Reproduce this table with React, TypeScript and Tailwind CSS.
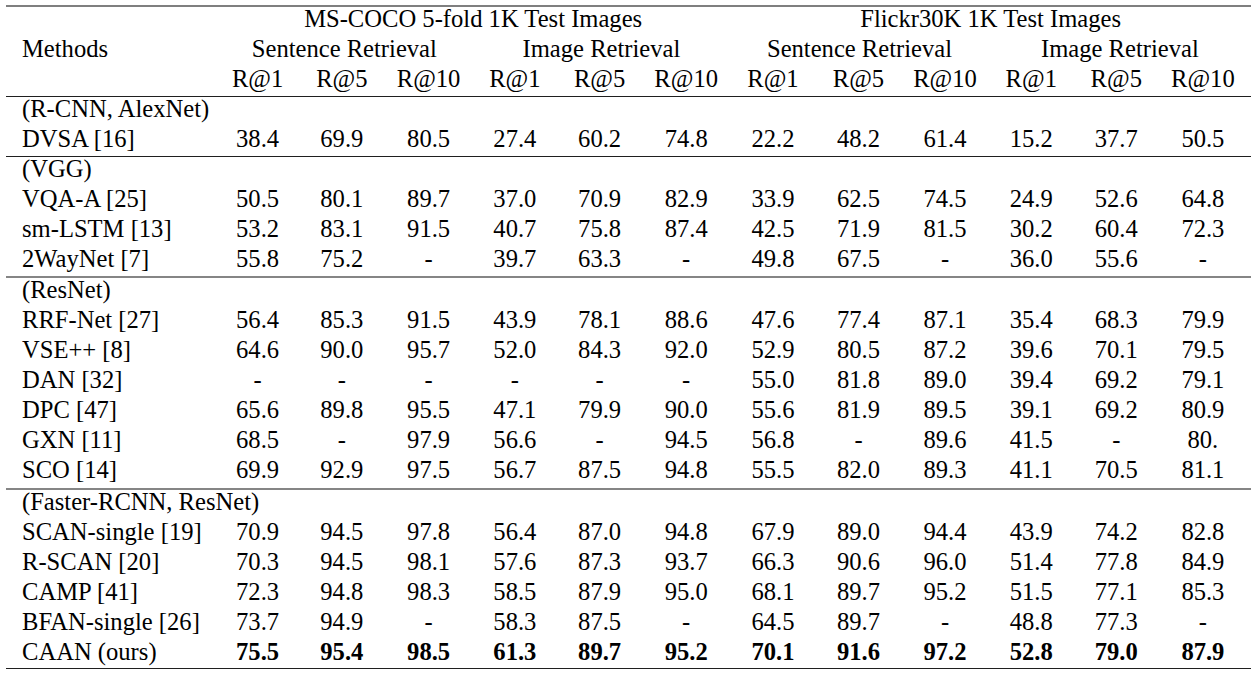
import React from 'react';

type Row = { name: string; vals: string[]; bold?: boolean };
type Group = { label: string; rows: Row[] };

const groups: Group[] = [
  {
    label: '(R-CNN, AlexNet)',
    rows: [{ name: 'DVSA [16]', vals: ['38.4', '69.9', '80.5', '27.4', '60.2', '74.8', '22.2', '48.2', '61.4', '15.2', '37.7', '50.5'] }],
  },
  {
    label: '(VGG)',
    rows: [
      { name: 'VQA-A [25]', vals: ['50.5', '80.1', '89.7', '37.0', '70.9', '82.9', '33.9', '62.5', '74.5', '24.9', '52.6', '64.8'] },
      { name: 'sm-LSTM [13]', vals: ['53.2', '83.1', '91.5', '40.7', '75.8', '87.4', '42.5', '71.9', '81.5', '30.2', '60.4', '72.3'] },
      { name: '2WayNet [7]', vals: ['55.8', '75.2', '-', '39.7', '63.3', '-', '49.8', '67.5', '-', '36.0', '55.6', '-'] },
    ],
  },
  {
    label: '(ResNet)',
    rows: [
      { name: 'RRF-Net [27]', vals: ['56.4', '85.3', '91.5', '43.9', '78.1', '88.6', '47.6', '77.4', '87.1', '35.4', '68.3', '79.9'] },
      { name: 'VSE++ [8]', vals: ['64.6', '90.0', '95.7', '52.0', '84.3', '92.0', '52.9', '80.5', '87.2', '39.6', '70.1', '79.5'] },
      { name: 'DAN [32]', vals: ['-', '-', '-', '-', '-', '-', '55.0', '81.8', '89.0', '39.4', '69.2', '79.1'] },
      { name: 'DPC [47]', vals: ['65.6', '89.8', '95.5', '47.1', '79.9', '90.0', '55.6', '81.9', '89.5', '39.1', '69.2', '80.9'] },
      { name: 'GXN [11]', vals: ['68.5', '-', '97.9', '56.6', '-', '94.5', '56.8', '-', '89.6', '41.5', '-', '80.'] },
      { name: 'SCO [14]', vals: ['69.9', '92.9', '97.5', '56.7', '87.5', '94.8', '55.5', '82.0', '89.3', '41.1', '70.5', '81.1'] },
    ],
  },
  {
    label: '(Faster-RCNN, ResNet)',
    rows: [
      { name: 'SCAN-single [19]', vals: ['70.9', '94.5', '97.8', '56.4', '87.0', '94.8', '67.9', '89.0', '94.4', '43.9', '74.2', '82.8'] },
      { name: 'R-SCAN [20]', vals: ['70.3', '94.5', '98.1', '57.6', '87.3', '93.7', '66.3', '90.6', '96.0', '51.4', '77.8', '84.9'] },
      { name: 'CAMP [41]', vals: ['72.3', '94.8', '98.3', '58.5', '87.9', '95.0', '68.1', '89.7', '95.2', '51.5', '77.1', '85.3'] },
      { name: 'BFAN-single [26]', vals: ['73.7', '94.9', '-', '58.3', '87.5', '-', '64.5', '89.7', '-', '48.8', '77.3', '-'] },
      { name: 'CAAN (ours)', vals: ['75.5', '95.4', '98.5', '61.3', '89.7', '95.2', '70.1', '91.6', '97.2', '52.8', '79.0', '87.9'], bold: true },
    ],
  },
];

const colWidths = [210, 83, 85.5, 88, 84.5, 85, 88, 85.5, 85.5, 87.5, 85, 85, 92];
const metrics = ['R@1', 'R@5', 'R@10', 'R@1', 'R@5', 'R@10', 'R@1', 'R@5', 'R@10', 'R@1', 'R@5', 'R@10'];

// row heights include the rule drawn under a row
const lastRowClass = [
  'h-[30px] [&>td]:border-b [&>td]:border-[#1f1f1f]',
  'h-[31px] [&>td]:border-b-2 [&>td]:border-[#858585]',
  'h-[32px] [&>td]:border-b-2 [&>td]:border-[#858585]',
  'h-[29px] [&>td]:border-b [&>td]:border-[#1f1f1f]',
];

function DataRow({ row, cls }: { row: Row; cls: string }) {
  return (
    <tr className={cls}>
      <td className="pl-4 align-top">{row.name}</td>
      {row.vals.map((v, i) => (
        <td key={i} className={`align-top text-center ${i === 11 ? 'pr-1' : ''} ${row.bold ? 'font-bold' : ''}`}>
          {v}
        </td>
      ))}
    </tr>
  );
}

export default function App() {
  return (
    <div className="w-[1251px] h-[676px] bg-white overflow-hidden pt-[5px] pl-[6px]">
      <table
        className="table-fixed border-separate border-spacing-0 w-[1245px] text-black text-[24.6px] leading-[24px] whitespace-nowrap"
        style={{ fontFamily: '"Liberation Serif", "Times New Roman", serif' }}
      >
        <colgroup>
          {colWidths.map((w, i) => (
            <col key={i} style={{ width: w }} />
          ))}
        </colgroup>
        <thead>
          <tr className="h-[32px] [&>td]:border-t-2 [&>td]:border-[#7f7f7f]">
            <td />
            <td colSpan={6} className="align-top text-center">MS-COCO 5-fold 1K Test Images</td>
            <td colSpan={6} className="align-top text-center">Flickr30K 1K Test Images</td>
          </tr>
          <tr className="h-[30px]">
            <td className="pl-4 align-top">Methods</td>
            <td colSpan={3} className="align-top text-center">Sentence Retrieval</td>
            <td colSpan={3} className="align-top text-center">Image Retrieval</td>
            <td colSpan={3} className="align-top text-center">Sentence Retrieval</td>
            <td colSpan={3} className="align-top text-center">Image Retrieval</td>
          </tr>
          <tr className="h-[30px] [&>td]:border-b [&>td]:border-[#1f1f1f]">
            <td />
            {metrics.map((m, i) => (
              <td key={i} className={`align-top text-center ${i === 11 ? 'pr-1' : ''}`}>
                {m}
              </td>
            ))}
          </tr>
        </thead>
        <tbody>
          {groups.map((g, gi) => (
            <React.Fragment key={gi}>
              <tr className="h-[30px]">
                <td colSpan={13} className="pl-4 align-top">{g.label}</td>
              </tr>
              {g.rows.map((r, ri) => (
                <DataRow key={ri} row={r} cls={ri === g.rows.length - 1 ? lastRowClass[gi] : 'h-[30px]'} />
              ))}
            </React.Fragment>
          ))}
        </tbody>
      </table>
    </div>
  );
}
